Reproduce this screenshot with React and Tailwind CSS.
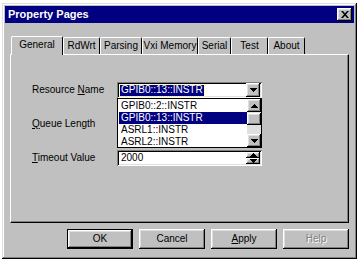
const raised =
  'shadow-[inset_-1px_-1px_0_#000,inset_1px_1px_0_#dfdfdf,inset_-2px_-2px_0_#808080,inset_2px_2px_0_#fff]'
const sunken =
  'shadow-[inset_1px_1px_0_#808080,inset_-1px_-1px_0_#fff,inset_2px_2px_0_#000,inset_-2px_-2px_0_#dfdfdf]'
const btn =
  'shadow-[inset_-1px_-1px_0_#000,inset_1px_1px_0_#fff,inset_-2px_-2px_0_#808080,inset_2px_2px_0_#dfdfdf]'

function Arrow({ up }) {
  return (
    <svg width="7" height="4" viewBox="0 0 7 4">
      {up ? <path d="M3 0h1v1h1v1h1v1h1v1H0V3h1V2h1V1h1z" fill="#000" /> : <path d="M0 0h7v1H6v1H5v1H4v1H3V3H2V2H1V1H0z" fill="#000" />}
    </svg>
  )
}

function ArrowBtn({ up, h = 'h-[14px]' }) {
  return (
    <div className={`w-[14px] ${h} bg-[#c0c0c0] ${btn} flex items-center justify-center`}>
      <Arrow up={up} />
    </div>
  )
}

const tabs = [
  { name: 'General', w: 'w-[52px]' },
  { name: 'RdWrt', w: 'w-[37px]' },
  { name: 'Parsing', w: 'w-[42px]' },
  { name: 'Vxi Memory', w: 'w-[56px]' },
  { name: 'Serial', w: 'w-[33px]' },
  { name: 'Test', w: 'w-[37px]' },
  { name: 'About', w: 'w-[37px]' },
]

const items = ['GPIB0::2::INSTR', 'GPIB0::13::INSTR', 'ASRL1::INSTR', 'ASRL2::INSTR']

function Label({ children }) {
  return <div className="w-[106px] shrink-0 pl-[21px] text-[10px] whitespace-nowrap">{children}</div>
}

export default function App() {
  return (
    <div className="w-[359px] h-[267px] bg-white pt-[3px] pl-[2px] font-['Liberation_Sans',Arial,sans-serif] text-black text-[10px] leading-none">
      <div className={`w-[355px] h-[256px] bg-[#c0c0c0] p-[3px] flex flex-col ${raised}`}>
        {/* title bar */}
        <div className="h-[17px] bg-[#000080] flex items-center justify-between pl-[3px] pr-[2px]">
          <span className="text-white font-bold text-[11px]">Property Pages</span>
          <div className={`w-[15px] h-[13px] bg-[#c0c0c0] ${btn} flex items-center justify-center`}>
            <svg width="8" height="7" viewBox="0 0 8 7">
              <path d="M0 0h2l2 2.2L6 0h2L5 3.5 8 7H6L4 4.8 2 7H0l3-3.5z" fill="#000" />
            </svg>
          </div>
        </div>

        {/* tabs */}
        <div className="mt-[12px] px-[5px]">
          <div className="flex items-end h-[19px] pl-[1px]">
            {tabs.map((t, i) =>
              i === 0 ? (
                <div
                  key={t.name}
                  className={`${t.w} h-[19px] -mb-[1px] relative z-10 bg-[#c0c0c0] border-t border-l border-white border-r border-r-black rounded-t-[2px] flex items-center justify-center pb-[2px]`}
                >
                  {t.name}
                </div>
              ) : (
                <div
                  key={t.name}
                  className={`${t.w} h-[17px] bg-[#c0c0c0] border-t border-l border-white border-r border-r-black rounded-t-[2px] flex items-center justify-center`}
                >
                  {t.name}
                </div>
              )
            )}
          </div>

          {/* panel */}
          <div className="relative h-[169px] bg-[#c0c0c0] border-t border-l border-white border-r border-b border-r-black border-b-black shadow-[inset_-1px_-1px_0_#808080] pt-[27px]">
            <div className="flex items-center h-[16px]">
              <Label>
                Resource <span className="underline">N</span>ame
              </Label>
              <div className={`w-[145px] h-[16px] bg-white ${sunken} flex items-center justify-between p-[2px]`}>
                <span className="ml-[1px] bg-[#000080] text-white px-[1px] h-[11px] flex items-center outline-1 outline-dotted outline-[#ffff80]">
                  GPIB0::13::INSTR
                </span>
                <ArrowBtn />
              </div>
            </div>

            <div className="flex items-center h-[16px] mt-[18px]">
              <Label>
                <span className="underline">Q</span>ueue Length
              </Label>
            </div>

            <div className="flex items-center h-[16px] mt-[18px]">
              <Label>
                <span className="underline">T</span>imeout Value
              </Label>
              <div className={`w-[145px] h-[16px] bg-white ${sunken} flex items-center justify-between p-[2px]`}>
                <span className="ml-[2px]">2000</span>
                <div className="flex flex-col">
                  <ArrowBtn up h="h-[6px]" />
                  <ArrowBtn h="h-[6px]" />
                </div>
              </div>
            </div>

            {/* open dropdown list */}
            <div className="absolute left-[106px] top-[43px] w-[145px] h-[50px] bg-white border border-black flex">
              <div className="flex-1 pt-[1px] pl-[1px]">
                {items.map((it, i) => (
                  <div
                    key={it}
                    className={`h-[12px] flex items-center pl-[2px] ${i === 1 ? 'bg-[#000080] text-white' : ''}`}
                  >
                    {it}
                  </div>
                ))}
              </div>
              <div className="w-[14px] flex flex-col bg-[#e0e0e0]">
                <ArrowBtn up h="h-[13px]" />
                <div className={`h-[12px] mt-[1px] bg-[#c0c0c0] ${btn}`} />
                <div className="mt-auto">
                  <ArrowBtn h="h-[13px]" />
                </div>
              </div>
            </div>
          </div>
        </div>

        {/* buttons */}
        <div className="flex justify-end gap-[6px] px-[5px] mt-[6px]">
          <div className="w-[66px] h-[20px] border border-black">
            <div className={`h-full bg-[#c0c0c0] ${btn} flex items-center justify-center`}>OK</div>
          </div>
          <div className={`w-[66px] h-[20px] bg-[#c0c0c0] ${btn} flex items-center justify-center`}>Cancel</div>
          <div className={`w-[66px] h-[20px] bg-[#c0c0c0] ${btn} flex items-center justify-center`}>
            <span>
              <span className="underline">A</span>pply
            </span>
          </div>
          <div className={`w-[66px] h-[20px] bg-[#c0c0c0] ${btn} flex items-center justify-center text-[#808080] [text-shadow:1px_1px_0_#fff]`}>
            Help
          </div>
        </div>
      </div>
    </div>
  )
}
